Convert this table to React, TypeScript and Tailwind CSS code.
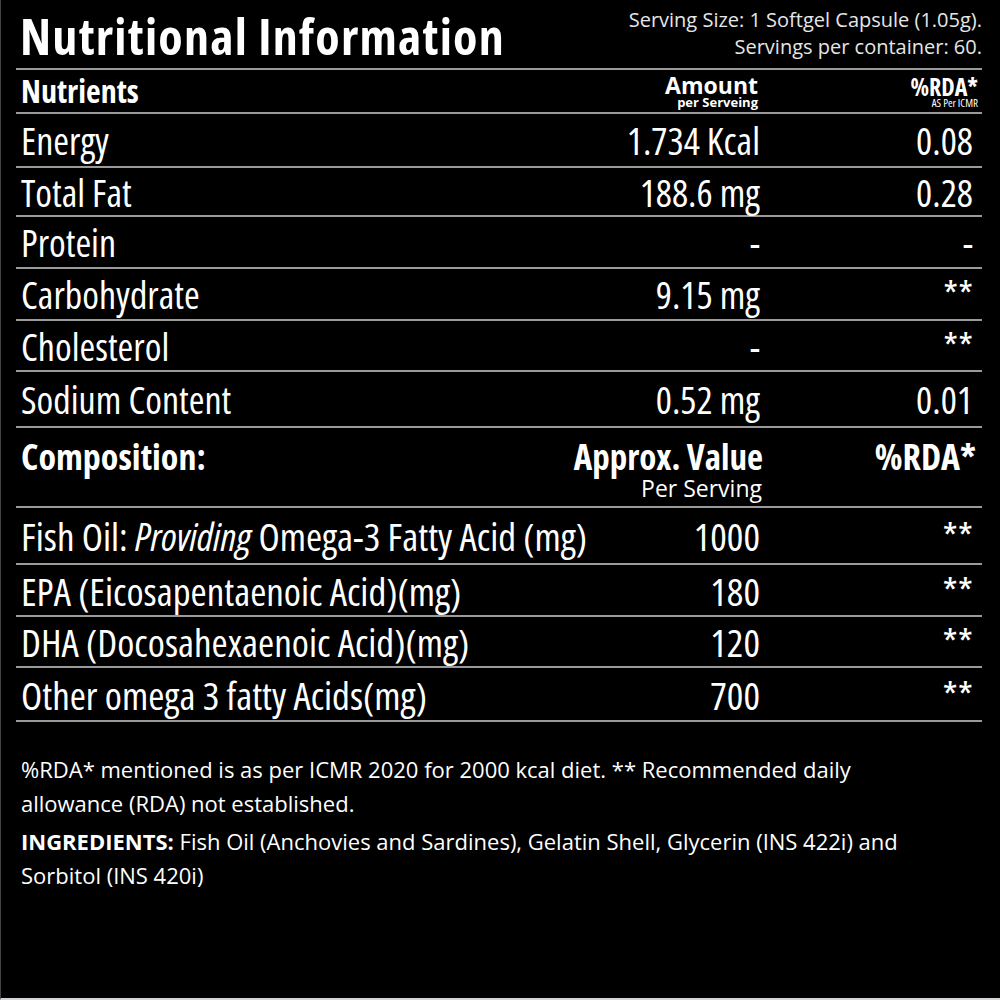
const nutrients = [
  { name: 'Energy', amount: '1.734 Kcal', rda: '0.08', h: 'h-[54px]' },
  { name: 'Total Fat', amount: '188.6 mg', rda: '0.28', h: 'h-[49px]' },
  { name: 'Protein', amount: '-', rda: '-', h: 'h-[52px]' },
  { name: 'Carbohydrate', amount: '9.15 mg', rda: '**', h: 'h-[52px]' },
  { name: 'Cholesterol', amount: '-', rda: '**', h: 'h-[51px]' },
  { name: 'Sodium Content', amount: '0.52 mg', rda: '0.01', h: 'h-[56px]' },
]

const composition = [
  { name: <>Fish Oil: <i>Providing</i> Omega-3 Fatty Acid (mg)</>, value: '1000', h: 'h-[57px]' },
  { name: 'EPA (Eicosapentaenoic Acid)(mg)', value: '180', h: 'h-[52px]' },
  { name: 'DHA (Docosahexaenoic Acid)(mg)', value: '120', h: 'h-[51px]' },
  { name: 'Other omega 3 fatty Acids(mg)', value: '700', h: 'h-[54px]' },
]

export default function App() {
  return (
    <div className="h-[1000px] w-[1000px] overflow-hidden border-b-2 border-l border-b-gray-300 border-l-[#444] bg-black font-['Open_Sans',sans-serif] text-white [font-stretch:75%]">
      <div className="ml-[15px] w-[966px]">
        <div className="flex h-[70px] items-start justify-between border-b-2 border-[#9a9a9a]">
          <h1 className="mt-[9px] pl-[4px] text-[50px] font-bold leading-[54px] tracking-[0.025em]">Nutritional Information</h1>
          <div className="mt-[6px] text-right text-[20px] leading-[27px] text-[#e6e6e6] [font-stretch:100%]">
            <p>Serving Size: 1 Softgel Capsule (1.05g).</p>
            <p>Servings per container: 60.</p>
          </div>
        </div>

        <div className="flex h-[44px] items-center border-b-2 border-[#9a9a9a] font-bold">
          <div className="flex-1 pl-[5px] text-[32px] leading-none">Nutrients</div>
          <div className="w-[200px] pr-[2px] pt-[2px] text-right [font-stretch:95%]">
            <div className="text-[23px] leading-[21px]">Amount</div>
            <div className="text-[13px] leading-[13px]">per Serveing</div>
          </div>
          <div className="w-[222px] pr-[4px] pt-[2px] text-right">
            <div className="text-[24px] leading-[21px]">%RDA*</div>
            <div className="text-[11px] font-normal leading-[12px]">AS Per ICMR</div>
          </div>
        </div>

        {nutrients.map((row) => (
          <div key={row.name} className={`flex items-center border-b-2 border-[#9a9a9a] text-[38px] leading-none ${row.h}`}>
            <div className="flex-1 whitespace-nowrap pl-[5px]">{row.name}</div>
            <div className="w-[200px] text-right">{row.amount}</div>
            <div className="w-[222px] pr-[9px] text-right">{row.rda}</div>
          </div>
        ))}

        <div className="flex h-[80px] border-b-2 border-[#9a9a9a] pt-[9px]">
          <div className="flex-1 pl-[5px] text-[36px] font-bold leading-[40px]">Composition:</div>
          <div className="w-[203px] whitespace-nowrap text-right">
            <div className="text-[35px] font-bold leading-[40px]">Approx. Value</div>
            <div className="pr-[1px] text-[23px] leading-[22px] [font-stretch:100%]">Per Serving</div>
          </div>
          <div className="w-[219px] pr-[6px] text-right text-[36px] font-bold leading-[40px]">%RDA*</div>
        </div>

        {composition.map((row) => (
          <div key={row.value} className={`flex items-center border-b-2 border-[#9a9a9a] text-[39px] leading-none ${row.h}`}>
            <div className="flex-1 whitespace-nowrap pl-[5px]">{row.name}</div>
            <div className="w-[120px] text-right">{row.value}</div>
            <div className="w-[222px] pr-[9px] text-right">**</div>
          </div>
        ))}

        <div className="mt-[30px] pl-[5px] text-[22px] leading-[34px] [font-stretch:100%]">
          <p>%RDA* mentioned is as per ICMR 2020 for 2000 kcal diet. ** Recommended daily<br />allowance (RDA) not established.</p>
          <p className="mt-[4px]">
            <b>INGREDIENTS:</b> Fish Oil (Anchovies and Sardines), Gelatin Shell, Glycerin (INS 422i) and<br />Sorbitol (INS 420i)
          </p>
        </div>
      </div>
    </div>
  )
}
